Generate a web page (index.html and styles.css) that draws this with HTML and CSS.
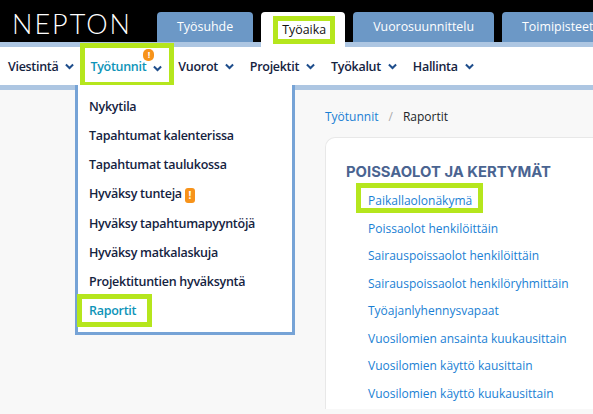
FILE: index.html
```html
<!DOCTYPE html>
<html lang="fi">

<head>
    <meta charset="UTF-8">
    <title>Nepton - Raportit</title>
    <link rel="stylesheet" href="styles.css">
</head>

<body>
    <header class="topbar">
        <div class="logo">NEPTON</div>
        <div class="tabs">
            <div class="tab">Työsuhde</div>
            <div class="tab active">Työaika</div>
            <div class="tab">Vuorosuunnittelu</div>
            <div class="tab last">Toimipisteet</div>
        </div>
    </header>

    <nav class="nav">
        <div class="nav-item">Viestintä <svg class="chev" viewBox="0 0 10 7"><path d="M1 1.2 5 5.2 9 1.2" /></svg></div>
        <div class="nav-item current">
            Työtunnit
            <span class="badge badge-top">!</span>
            <svg class="chev chev-low" viewBox="0 0 10 7"><path d="M1 1.2 5 5.2 9 1.2" /></svg>
        </div>
        <div class="nav-item">Vuorot <svg class="chev" viewBox="0 0 10 7"><path d="M1 1.2 5 5.2 9 1.2" /></svg></div>
        <div class="nav-item">Projektit <svg class="chev" viewBox="0 0 10 7"><path d="M1 1.2 5 5.2 9 1.2" /></svg></div>
        <div class="nav-item">Työkalut <svg class="chev" viewBox="0 0 10 7"><path d="M1 1.2 5 5.2 9 1.2" /></svg></div>
        <div class="nav-item">Hallinta <svg class="chev" viewBox="0 0 10 7"><path d="M1 1.2 5 5.2 9 1.2" /></svg></div>
    </nav>

    <div class="dropdown">
        <div class="drop-item">Nykytila</div>
        <div class="drop-item">Tapahtumat kalenterissa</div>
        <div class="drop-item">Tapahtumat taulukossa</div>
        <div class="drop-item">Hyväksy tunteja <span class="badge">!</span></div>
        <div class="drop-item">Hyväksy tapahtumapyyntöjä</div>
        <div class="drop-item">Hyväksy matkalaskuja</div>
        <div class="drop-item">Projektituntien hyväksyntä</div>
        <div class="drop-item selected">Raportit</div>
    </div>

    <main class="content">
        <div class="crumbs">
            <span class="crumb-link">Työtunnit</span>
            <span class="crumb-sep">/</span>
            <span>Raportit</span>
        </div>
        <section class="card">
            <h2 class="card-title">POISSAOLOT JA KERTYMÄT</h2>
            <ul class="reports">
                <li class="report first">Paikallaolonäkymä</li>
                <li class="report">Poissaolot henkilöittäin</li>
                <li class="report">Sairauspoissaolot henkilöittäin</li>
                <li class="report">Sairauspoissaolot henkilöryhmittäin</li>
                <li class="report">Työajanlyhennysvapaat</li>
                <li class="report">Vuosilomien ansainta kuukausittain</li>
                <li class="report">Vuosilomien käyttö kausittain</li>
                <li class="report">Vuosilomien käyttö kuukausittain</li>
            </ul>
        </section>
    </main>
</body>

</html>
```

FILE: styles.css
```css
* {
    margin: 0;
    padding: 0;
    box-sizing: border-box;
}

body {
    height: 414px;
    overflow: hidden;
    background-color: #f8f8f8;
    color: #212529;
    font-family: "Open Sans", sans-serif;
    position: relative;
}

.topbar {
    display: flex;
    height: 47px;
    background: linear-gradient(#000 42px, #adc6e2 42px);
}

.logo {
    flex-shrink: 0;
    width: 157px;
    padding: 9px 0 0 12px;
    color: #fff;
    font-family: Lato, sans-serif;
    font-size: 27px;
    font-weight: 300;
    line-height: 29px;
    letter-spacing: 2px;
}

.tabs {
    display: flex;
    flex-grow: 1;
    gap: 8px;
    padding-top: 12px;
    min-width: 0;
}

.tab {
    flex-shrink: 0;
    height: 30px;
    padding: 0 20px;
    background-color: #6c98c6;
    color: #fff;
    border-radius: 4px 4px 0 0;
    font-size: 12.4px;
    line-height: 30px;
    white-space: nowrap;
}

.tab.last {
    flex-shrink: 1;
    min-width: 0;
    overflow: hidden;
    border-top-right-radius: 0;
}

.tab.active {
    height: 35px;
    width: 84px;
    padding-left: 21px;
    background-color: #fff;
    color: #111;
    line-height: 36px;
    position: relative;
}

/* green annotation boxes drawn over the page */
.tab.active::after,
.nav-item.current::after,
.drop-item.selected::after,
.report.first::after {
    content: '';
    position: absolute;
    box-sizing: border-box;
    border: 5px solid #b5e61d;
    pointer-events: none;
}

.tab.active::after {
    top: 4px;
    left: 12px;
    width: 62px;
    height: 28px;
}

.nav {
    display: flex;
    align-items: center;
    gap: 16px;
    height: 38px;
    padding-left: 8px;
    background-color: #fff;
    color: #15233f;
    font-size: 12.5px;
    font-weight: 600;
    letter-spacing: -0.3px;
}

.nav-item {
    display: flex;
    align-items: center;
    gap: 7px;
    white-space: nowrap;
    position: relative;
}

.nav-item.current {
    color: #0e94b8;
}

.nav-item.current::after {
    top: -15px;
    bottom: -12px;
    left: -10px;
    right: -12px;
}

.chev {
    width: 9px;
    height: 7px;
    fill: none;
    stroke: #1f4e8c;
    stroke-width: 2.2;
}

.chev-low {
    margin-top: 5px;
}

.badge {
    display: inline-block;
    width: 10px;
    height: 15px;
    background-color: #f7931a;
    color: #fff;
    border-radius: 3px;
    font-size: 10px;
    font-weight: 700;
    line-height: 15px;
    text-align: center;
    vertical-align: middle;
}

.badge-top {
    position: absolute;
    top: -9px;
    left: 53px;
    width: 11px;
    height: 12px;
    border-radius: 5px;
    line-height: 12px;
    font-size: 9px;
}

.dropdown {
    position: absolute;
    top: 85px;
    left: 75px;
    width: 220px;
    height: 250px;
    padding-top: 7px;
    background-color: #fff;
    border: 3px solid #76a3d6;
    border-top: 0;
    z-index: 2;
    color: #15233f;
    font-size: 12.5px;
    font-weight: 600;
    letter-spacing: -0.27px;
}

.drop-item {
    height: 29.15px;
    padding-left: 11px;
    line-height: 29px;
    white-space: nowrap;
    position: relative;
}

.drop-item.selected {
    color: #0e94b8;
}

.drop-item.selected::after {
    top: -2px;
    left: -1px;
    width: 75px;
    height: 33px;
}

.content {
    padding: 5px 0 0 325px;
    border-top: 5px solid #adc6e2;
}

.crumbs {
    display: flex;
    gap: 10px;
    height: 42px;
    padding-top: 12px;
    font-size: 12px;
    line-height: 20px;
}

.crumb-link {
    color: #1a7fd4;
}

.crumb-sep {
    color: #aaa;
}

.card {
    height: 272px;
    padding: 25px 0 0 20px;
    background-color: #fff;
    border: 1px solid #e8e8e8;
    border-right: 0;
    border-bottom: 0;
    border-radius: 10px 0 0 0;
}

.card-title {
    color: #4a6491;
    font-family: Inter, sans-serif;
    font-size: 14.8px;
    font-weight: 700;
    line-height: 18px;
}

.reports {
    list-style: none;
    padding: 6px 0 0 22px;
    color: #1a7fd4;
    font-size: 12px;
}

.report {
    height: 27.5px;
    line-height: 27.5px;
    white-space: nowrap;
    position: relative;
}

.report.first::after {
    top: -4px;
    left: -12px;
    width: 127px;
    height: 30px;
}
```
